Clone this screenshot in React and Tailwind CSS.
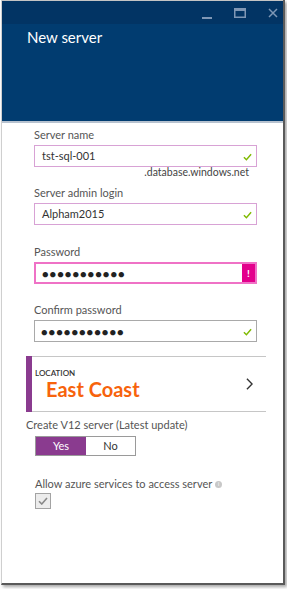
import { useState } from 'react';

const Check = ({ className = '' }) => (
  <svg viewBox="0 0 10 8" className={className} fill="none">
    <path d="M1 4.2 3.8 7 9 1" stroke="currentColor" strokeWidth="1.6" />
  </svg>
);

const Field = ({ label, value, tone = 'ok', secret = false, className = '' }) => {
  const border =
    tone === 'error'
      ? 'border-2 border-[#ef72c6]'
      : tone === 'neutral'
        ? 'border border-[#a9a9a9]'
        : 'border border-[#d8a2d5]';
  return (
    <div className={className}>
      <div className="text-[11px] leading-[14px] text-[#555] mb-[3px]">{label}</div>
      <div className={`relative h-[22px] w-[223px] flex items-center ${border}`}>
        {secret ? (
          <span className="pl-[6px] text-[11px] tracking-[1px] text-[#222] leading-none">{'●'.repeat(11)}</span>
        ) : (
          <span className="pl-[7px] text-[11px] text-[#333]">{value}</span>
        )}
        {tone === 'error' ? (
          <span className="absolute right-0 top-0 bottom-0 w-[13px] bg-[#e3008c] text-white text-[10px] font-bold flex items-center justify-center">!</span>
        ) : (
          <Check className="absolute right-[4px] top-[7px] w-[9px] h-[8px] text-[#7fba00]" />
        )}
      </div>
    </div>
  );
};

export default function App() {
  const [v12, setV12] = useState(true);

  return (
    <div className="w-[287px] h-[589px] bg-white" style={{ fontFamily: 'Lato, "Noto Sans", sans-serif' }}>
      <div className="ml-[1px] w-[284px] h-[585px] border-l border-[#cfcfcf] border-r-2 border-r-[#5a5a5a] border-b-2 border-b-[#5a5a5a] shadow-[2px_2px_3px_rgba(0,0,0,0.35)] flex flex-col bg-white">
        <div className="h-[123px] bg-[#013c70] border-t border-[#c4c4c4] border-b-2 border-b-[#b7c2cf] flex flex-col">
          <div className="h-[23px] bg-[#023464] flex items-center justify-end gap-[22px] pr-[5px]">
            <svg viewBox="0 0 10 10" className="w-[10px] h-[10px] mt-[2px]">
              <rect x="0" y="8" width="10" height="2" fill="#7f97b5" />
            </svg>
            <svg viewBox="0 0 12 10" className="w-[12px] h-[10px]">
              <rect x="0.75" y="0.75" width="10.5" height="8.5" fill="none" stroke="#7f97b5" strokeWidth="1.5" />
              <rect x="0" y="0" width="12" height="3" fill="#7f97b5" />
            </svg>
            <svg viewBox="0 0 10 10" className="w-[10px] h-[10px]">
              <path d="M1 1 9 9M9 1 1 9" stroke="#7f97b5" strokeWidth="1.5" />
            </svg>
          </div>
          <div className="pl-[25px] pt-[4px] text-[15px] text-white leading-[18px]">New server</div>
        </div>

        <div className="flex flex-col pl-[32px]">
          <Field label="Server name" value="tst-sql-001" className="mt-[5px]" />
          <div className="w-[215px] text-right text-[10.5px] leading-[11px] text-[#444] mt-0">.database.windows.net</div>
          <Field label="Server admin login" value="Alpham2015" className="mt-[8px]" />
          <Field label="Password" secret tone="error" className="mt-[20px]" />
          <Field label="Confirm password" secret tone="neutral" className="mt-[19px]" />
        </div>

        <div className="ml-[24px] mt-[14px] w-[240px] h-[56px] border-t border-b border-[#c6c6c6] flex items-center relative">
          <div className="absolute left-0 -top-px -bottom-px w-[6px] bg-[#8a3b8f]" />
          <div className="pl-[9px] flex flex-col">
            <span className="text-[8px] leading-[10px] text-[#333] font-semibold">LOCATION</span>
            <span className="pl-[11px] text-[20px] leading-[22px] font-bold text-[#f7630c]">East Coast</span>
          </div>
          <svg viewBox="0 0 8 14" className="absolute right-[13px] top-[21px] w-[7px] h-[12px]">
            <path d="M1 1 7 7 1 13" fill="none" stroke="#333" strokeWidth="1.6" />
          </svg>
        </div>

        <div className="pl-[24px] mt-[6px] text-[11px] leading-[14px] text-[#555]">Create V12 server (Latest update)</div>
        <div className="ml-[33px] mt-[4px] flex w-[101px] h-[20px] border border-[#9a9a9a]">
          <button
            type="button"
            onClick={() => setV12(true)}
            className={`w-[50px] text-[11px] ${v12 ? 'bg-[#8a3b8f] text-white' : 'text-[#333]'}`}
          >
            Yes
          </button>
          <button
            type="button"
            onClick={() => setV12(false)}
            className={`flex-1 text-[11px] ${!v12 ? 'bg-[#8a3b8f] text-white' : 'text-[#333]'}`}
          >
            No
          </button>
        </div>

        <div className="pl-[33px] mt-[21px] flex items-center gap-[3px] text-[11px] leading-[14px] text-[#555]">
          Allow azure services to access server
          <span className="w-[7px] h-[7px] rounded-full bg-[#c8c8c8] text-white text-[5px] leading-[7px] text-center">i</span>
        </div>
        <div className="ml-[33px] mt-[2px] w-[16px] h-[16px] border border-[#a3a3a3] bg-[#ececec] flex items-center justify-center">
          <Check className="w-[10px] h-[8px] text-[#888]" />
        </div>
      </div>
    </div>
  );
}
